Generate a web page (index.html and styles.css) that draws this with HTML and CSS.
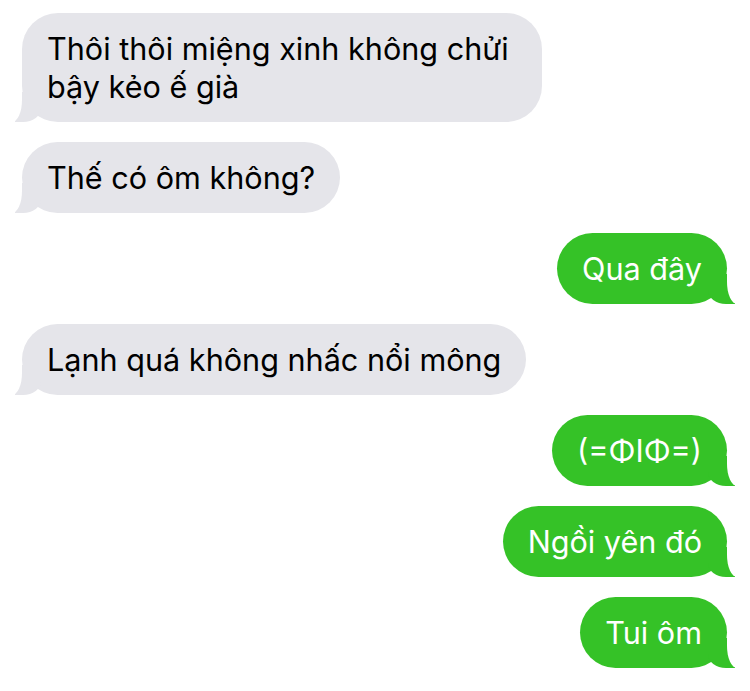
FILE: index.html
```html
<!doctype html>
<html>
  <head>
    <meta charset="utf-8" />
    <meta name="viewport" content="width=device-width, initial-scale=1.0" />
    <title>Tin nhắn</title>
    <link rel="stylesheet" href="styles.css">
  </head>
  <body>
    <div class="thread">
      <div class="bubble them wide">Thôi thôi miệng xinh không chửi bậy kẻo ế già</div>
      <div class="bubble them">Thế có ôm không?</div>
      <div class="bubble me">Qua đây</div>
      <div class="bubble them">Lạnh quá không nhấc nổi mông</div>
      <div class="bubble me">(=ΦIΦ=)</div>
      <div class="bubble me">Ngồi yên đó</div>
      <div class="bubble me">Tui ôm</div>
    </div>
  </body>
</html>
```

FILE: styles.css
```css
html,
body {
  --bubble-gray: #e5e5ea;
  --bubble-green: #35c227;
  background: #fff;
  font-family: 'Inter', 'Noto Sans', sans-serif;
  -webkit-font-smoothing: antialiased;
}

body {
  margin: 0;
}

.thread {
  display: flex;
  flex-direction: column;
  gap: 19.5px;
  padding: 13px 23px 0 22px;
}

.bubble {
  position: relative;
  max-width: 520px;
  padding: 17px 25px;
  border-radius: 36px;
  font-size: 30.6px;
  line-height: 37.5px;
  box-sizing: border-box;
}

.bubble.wide {
  width: 520px;
}

/* incoming, left side */
.them {
  align-self: flex-start;
  background: var(--bubble-gray);
  color: #000;
}

.them::before,
.them::after {
  content: '';
  position: absolute;
  bottom: 0;
  height: 30px;
}

.them::before {
  left: -7px;
  width: 26px;
  background: var(--bubble-gray);
  border-bottom-right-radius: 18px 14px;
}

.them::after {
  left: -30px;
  width: 30px;
  background: #fff;
  border-bottom-right-radius: 10px 22px;
}

/* outgoing, right side */
.me {
  align-self: flex-end;
  background: var(--bubble-green);
  color: #fff;
}

.me::before,
.me::after {
  content: '';
  position: absolute;
  bottom: 0;
  height: 30px;
}

.me::before {
  right: -8px;
  width: 27px;
  background: var(--bubble-green);
  border-bottom-left-radius: 18px 14px;
}

.me::after {
  right: -30px;
  width: 30px;
  background: #fff;
  border-bottom-left-radius: 10px 22px;
}
```
